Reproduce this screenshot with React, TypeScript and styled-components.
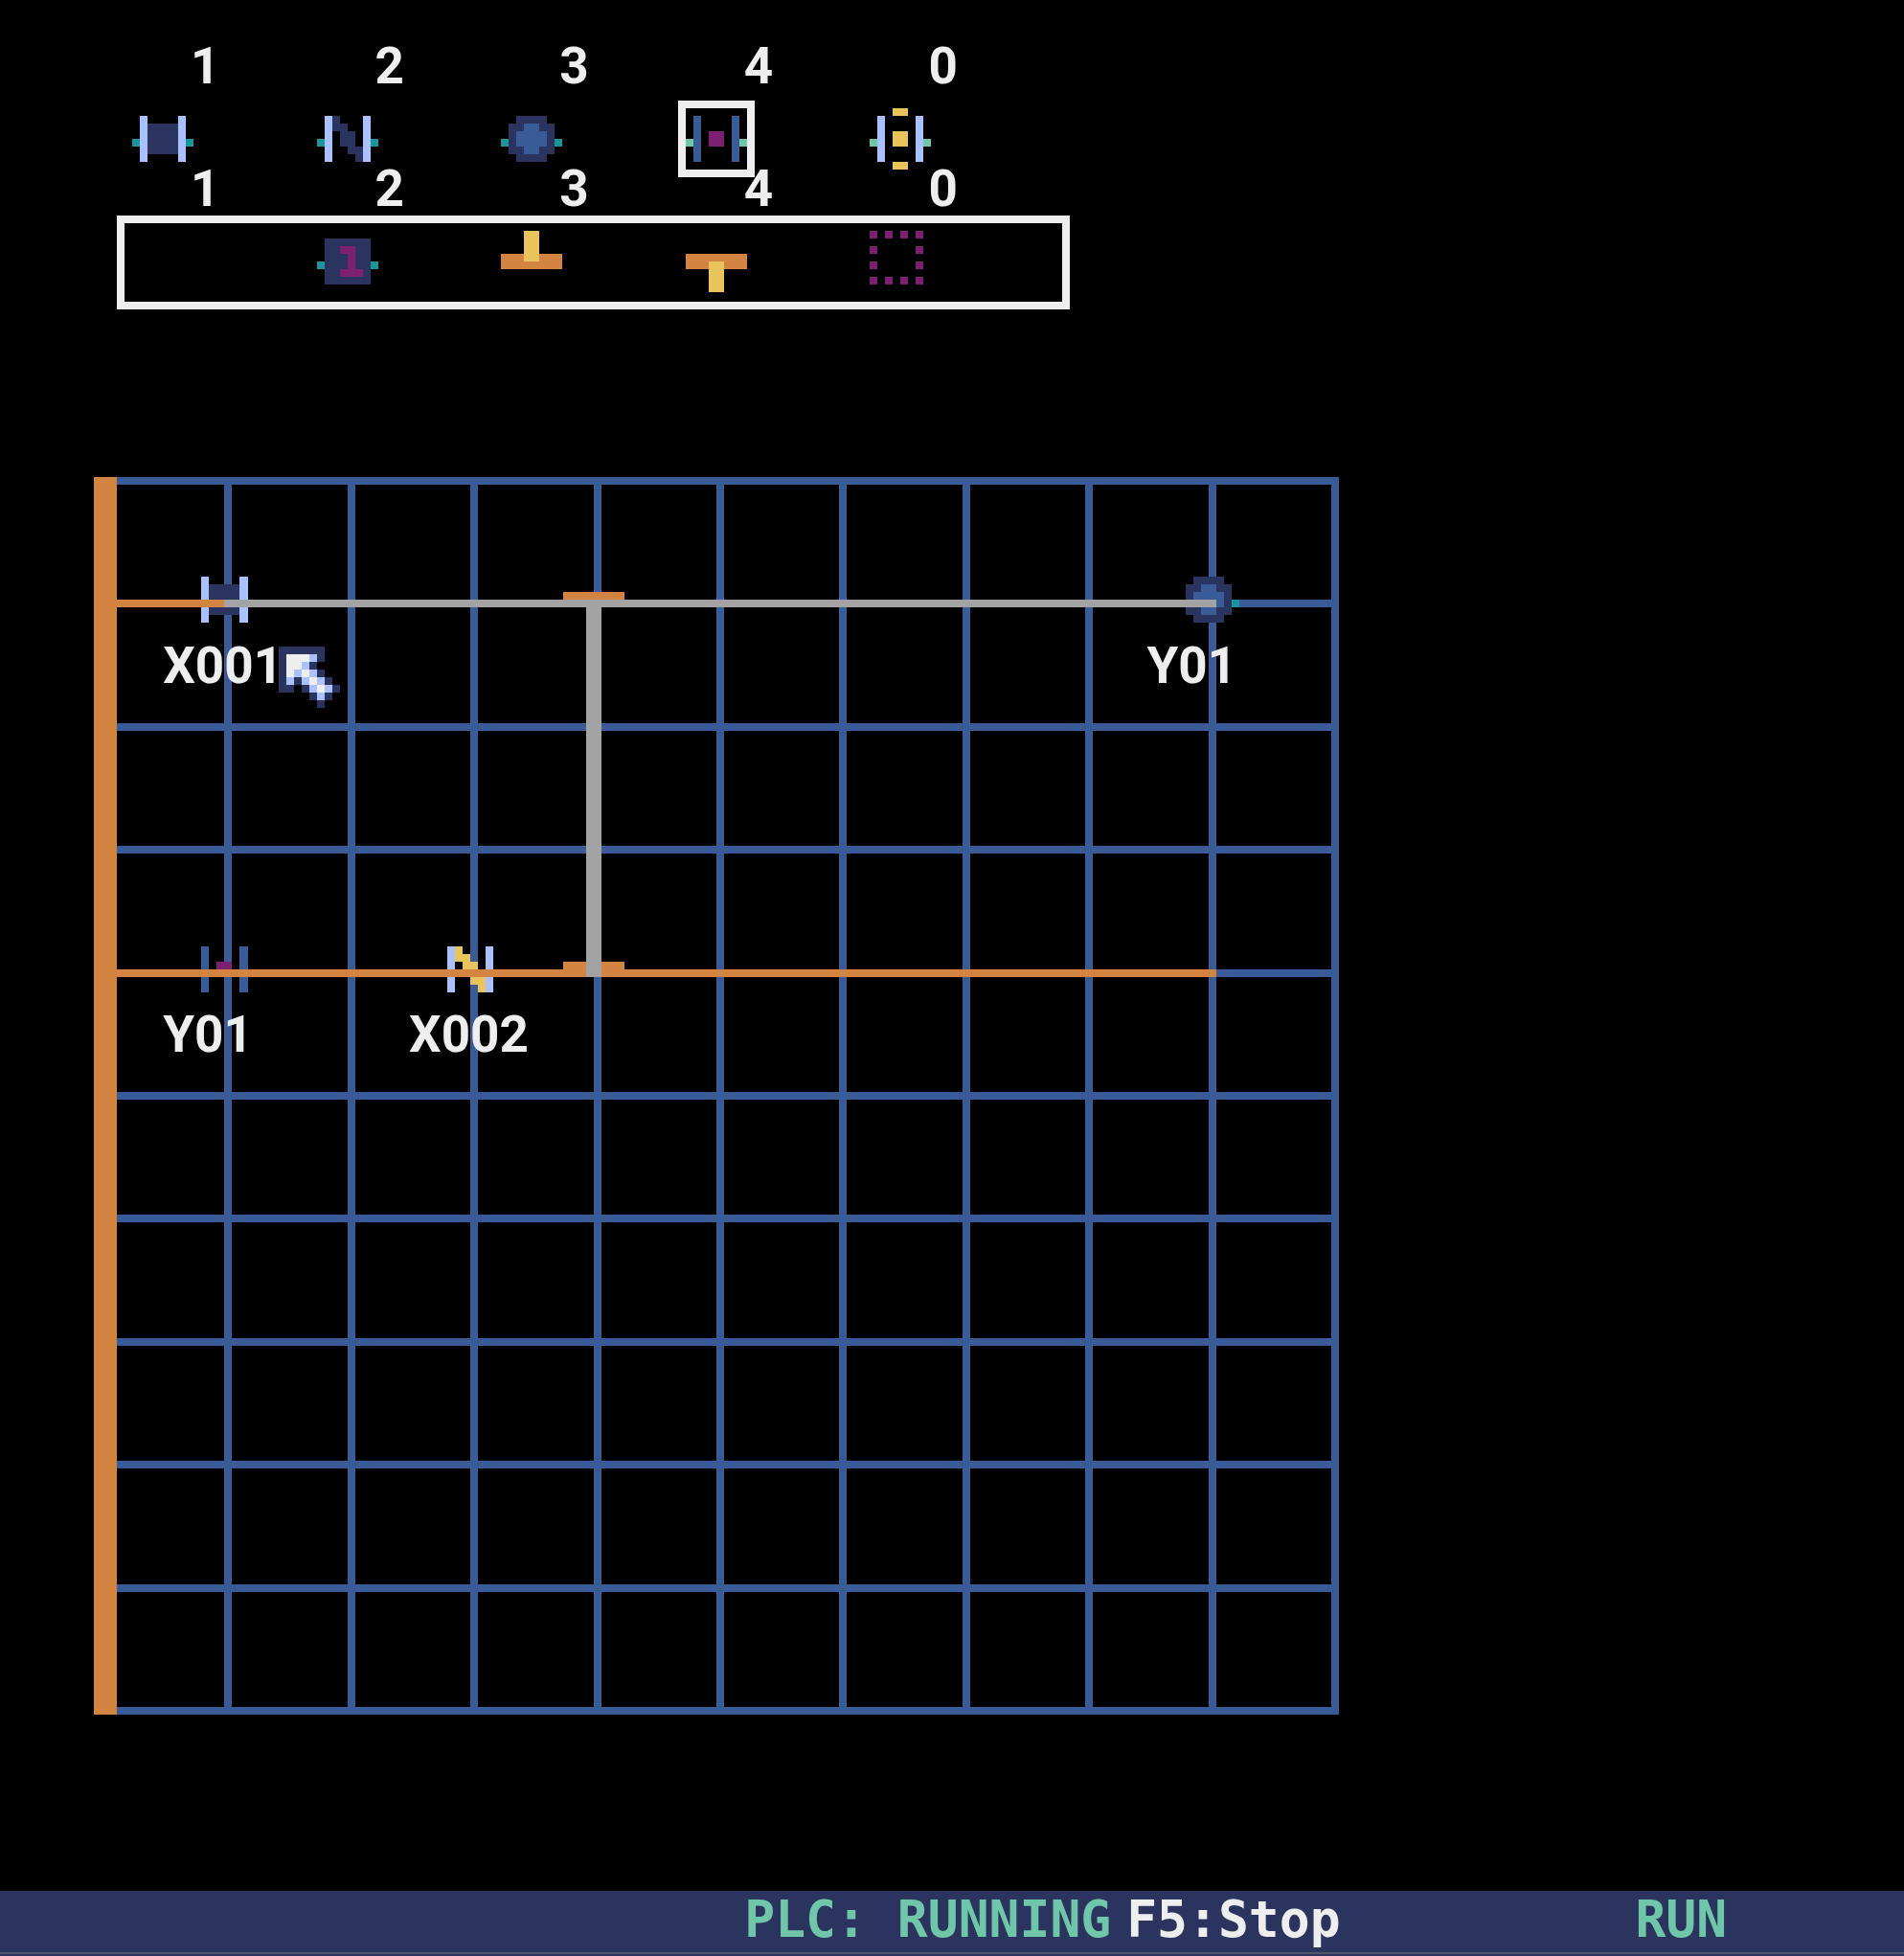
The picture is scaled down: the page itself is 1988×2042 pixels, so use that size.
import React from 'react';
import styled, { createGlobalStyle } from 'styled-components';

const color = {
  black: '#000000',
  navy: '#2b335f',
  purple: '#7e2072',
  teal: '#19959c',
  blue: '#395c98',
  light: '#a9c1ff',
  white: '#eeeeee',
  orange: '#d38441',
  yellow: '#e9c35b',
  mint: '#70c6a9',
  gray: '#a3a3a3',
  slate: '#51566b',
};

/* One letter per palette entry, used in the sprite maps below. */
const ink: Record<string, string> = {
  n: color.navy,
  p: color.purple,
  t: color.teal,
  b: color.blue,
  l: color.light,
  w: color.white,
  o: color.orange,
  y: color.yellow,
  m: color.mint,
};

const sprites = {
  contactOpen: ['........', '.l....l.', '.lnnnnl.', '.lnnnnl.', 'tlnnnnlt', '.lnnnnl.', '.l....l.', '........'],
  contactClosed: ['........', '.ln...l.', '.lnn..l.', '.l.nn.l.', 'tl.nn.lt', '.l..nnl.', '.l...nl.', '........'],
  contactClosedOn: ['........', '.ly...l.', '.lyy..l.', '.l.yy.l.', 'tl.yy.lt', '.l..yyl.', '.l...yl.', '........'],
  coil: ['........', '..nnnn..', '.nnbbnn.', '.nbbbbn.', 'tnbbbbnt', '.nnbbnn.', '..nnnn..', '........'],
  relay: ['........', '.b....b.', '.b....b.', '.b.pp.b.', 'mb.pp.bm', '.b....b.', '.b....b.', '........'],
  relayOn: ['...yy...', '.l....l.', '.l....l.', '.l.yy.l.', 'ml.yy.lm', '.l....l.', '.l....l.', '...yy...'],
  timer: ['........', '.nnnnnn.', '.nnppnn.', '.nnnpnn.', 'tnnnpnnt', '.nnpppn.', '.nnnnnn.', '........'],
  branchUp: ['...yy...', '...yy...', '...yy...', 'oooyyooo', 'oooooooo', '........', '........', '........'],
  branchDown: ['........', '........', '........', 'oooooooo', 'oooyyooo', '...yy...', '...yy...', '...yy...'],
  erase: ['p.p.p.p.', '........', 'p.....p.', '........', 'p.....p.', '........', 'p.p.p.p.', '........'],
  pointer: ['nnnnnn..', 'nwwwln..', 'nwwln...', 'nwlwln..', 'nlnlwln.', 'nn.nlwln', '....nln.', '.....n..'],
};

type SpriteName = keyof typeof sprites;

function Pixels({ name, x = 0, y = 0 }: { name: SpriteName; x?: number; y?: number }) {
  return (
    <g>
      {sprites[name].map((row, r) =>
        Array.from(row.matchAll(/([a-z])\1*/g), (run) => (
          <rect
            key={`${r}-${run.index}`}
            x={x + run.index}
            y={y + r}
            width={run[0].length}
            height={1}
            fill={ink[run[1]]}
          />
        )),
      )}
    </g>
  );
}

const GlobalStyle = createGlobalStyle`
  *, *::before, *::after { box-sizing: border-box; }
  body { margin: 0; background: ${color.black}; }
`;

const Page = styled.div`
  display: flex;
  flex-direction: column;
  min-height: 100vh;
  background: ${color.black};
  color: ${color.white};
  font-family: Roboto, 'Liberation Sans', sans-serif;
  font-size: 53px;
  font-weight: 700;
  line-height: 40px;
`;

const Workspace = styled.main`
  display: flex;
  flex-direction: column;
  flex: 1;
  gap: 193px;
  padding: 49px 98px 64px;
`;

const Toolbox = styled.nav`
  width: 53.74%;
  margin-left: 40px;
`;

const ToolRow = styled.div<{ $framed?: boolean }>`
  position: relative;
  display: grid;
  grid-template-columns: repeat(5, 1fr);

  &::after {
    content: '';
    display: ${(p) => (p.$framed ? 'block' : 'none')};
    position: absolute;
    inset: 48px -16px -18px;
    border: 8px solid ${color.white};
    pointer-events: none;
  }
`;

const ToolButton = styled.button`
  display: flex;
  flex-direction: column;
  align-items: flex-start;
  gap: 24px;
  padding: 0;
  border: 0;
  background: none;
  color: inherit;
  font: inherit;
  cursor: pointer;
`;

const ToolKey = styled.span`
  padding-left: 61px;
`;

const ToolIcon = styled.svg<{ $selected?: boolean }>`
  display: block;
  width: 64px;
  height: 64px;
  outline: ${(p) => (p.$selected ? `8px solid ${color.white}` : 'none')};
`;

const Board = styled.section`
  position: relative;
  display: grid;
  grid-template-columns: 3fr 159fr;
  width: 72.55%;
  aspect-ratio: 162 / 161;
`;

const Rail = styled.div`
  background: ${color.orange};
`;

const Cells = styled.div`
  display: grid;
  grid-template-columns: 14fr repeat(9, 15fr);
  grid-template-rows: repeat(10, 1fr);
  gap: 8px;
  padding: 8px 8px 8px 0;
  background: ${color.blue};
`;

const Cell = styled.div`
  background: ${color.black};
`;

const Diagram = styled.svg`
  position: absolute;
  inset: 0;
  width: 100%;
  height: 100%;
`;

/* Column and row are counted in board pixels (162 across, 161 down). */
const Address = styled.span<{ $col: number; $row: number }>`
  position: absolute;
  left: calc(100% * ${(p) => p.$col} / 162);
  top: calc(100% * ${(p) => p.$row} / 161);
  white-space: nowrap;
`;

const StatusBar = styled.footer`
  display: flex;
  align-items: flex-start;
  gap: 16px;
  height: 68px;
  padding: 10px 9.3% 0 39.1%;
  background: linear-gradient(${color.slate}, ${color.slate}) 0 64px / 100% 2px no-repeat ${color.navy};
  font-family: 'DejaVu Sans Mono', 'Liberation Mono', monospace;
  white-space: pre;
`;

const StatusText = styled.span`
  color: ${color.mint};
`;

const StopButton = styled.button`
  padding: 0;
  border: 0;
  background: none;
  color: ${color.white};
  font: inherit;
  cursor: pointer;
`;

const Mode = styled.span`
  margin-left: auto;
  color: ${color.mint};
`;

type Tool = { key: string; title: string; icon?: SpriteName; selected?: boolean };

const deviceTools: Tool[] = [
  { key: '1', title: 'Open contact', icon: 'contactOpen' },
  { key: '2', title: 'Closed contact', icon: 'contactClosed' },
  { key: '3', title: 'Coil', icon: 'coil' },
  { key: '4', title: 'Relay contact', icon: 'relay', selected: true },
  { key: '0', title: 'Active relay', icon: 'relayOn' },
];

const wiringTools: Tool[] = [
  { key: '1', title: 'Empty' },
  { key: '2', title: 'Timer', icon: 'timer' },
  { key: '3', title: 'Branch up', icon: 'branchUp' },
  { key: '4', title: 'Branch down', icon: 'branchDown' },
  { key: '0', title: 'Erase', icon: 'erase' },
];

const devices: { icon: SpriteName; x: number; y: number; address?: string }[] = [
  { icon: 'contactOpen', x: 13, y: 12, address: 'X001' },
  { icon: 'branchDown', x: 61, y: 12 },
  { icon: 'coil', x: 141, y: 12, address: 'Y01' },
  { icon: 'relay', x: 13, y: 60, address: 'Y01' },
  { icon: 'contactClosedOn', x: 45, y: 60, address: 'X002' },
  { icon: 'branchUp', x: 61, y: 60 },
];

const wires = [
  { x: 3, y: 16, width: 14, height: 1, fill: color.orange },
  { x: 17, y: 16, width: 129, height: 1, fill: color.gray },
  { x: 3, y: 64, width: 143, height: 1, fill: color.orange },
  { x: 64, y: 16, width: 2, height: 49, fill: color.gray },
];

function Tools({ items, framed }: { items: Tool[]; framed?: boolean }) {
  return (
    <ToolRow $framed={framed}>
      {items.map((tool) => (
        <ToolButton key={tool.key} type="button" title={tool.title} aria-pressed={!!tool.selected}>
          <ToolKey>{tool.key}</ToolKey>
          <ToolIcon $selected={tool.selected} viewBox="0 0 8 8" shapeRendering="crispEdges" aria-hidden="true">
            {tool.icon && <Pixels name={tool.icon} />}
          </ToolIcon>
        </ToolButton>
      ))}
    </ToolRow>
  );
}

export default function App() {
  return (
    <Page>
      <GlobalStyle />
      <Workspace>
        <Toolbox>
          <Tools items={deviceTools} />
          <Tools items={wiringTools} framed />
        </Toolbox>
        <Board>
          <Rail />
          <Cells>
            {Array.from({ length: 100 }, (_, i) => (
              <Cell key={i} />
            ))}
          </Cells>
          <Diagram viewBox="0 0 162 161" preserveAspectRatio="none" shapeRendering="crispEdges" aria-hidden="true">
            {devices.map((d) => (
              <Pixels key={`${d.x}-${d.y}`} name={d.icon} x={d.x} y={d.y} />
            ))}
            {wires.map((w) => (
              <rect key={`${w.x}-${w.y}`} {...w} />
            ))}
            <Pixels name="pointer" x={24} y={22} />
          </Diagram>
          {devices
            .filter((d) => d.address)
            .map((d) => (
              <Address key={`${d.x}-${d.y}`} $col={d.x - 4} $row={d.y + 10}>
                {d.address}
              </Address>
            ))}
        </Board>
      </Workspace>
      <StatusBar>
        <StatusText>PLC: RUNNING</StatusText>
        <StopButton type="button">F5:Stop</StopButton>
        <Mode>RUN</Mode>
      </StatusBar>
    </Page>
  );
}
